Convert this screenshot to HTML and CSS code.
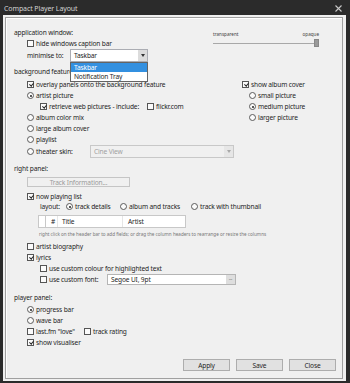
FILE: index.html
```html
<!DOCTYPE html>
<html lang="en">
<head>
  <meta charset="UTF-8">
  <title>Compact Player Layout</title>
  <link rel="stylesheet" href="styles.css">
</head>
<body>
<div class="window">
  <div class="titlebar">
    <span class="title">Compact Player Layout</span>
    <svg class="close" width="7" height="7" viewBox="0 0 7 7"><path d="M0.5 0.5L6.5 6.5M6.5 0.5L0.5 6.5" stroke="#c8c8c8" stroke-width="1.1"/></svg>
  </div>
  <div class="client">
    <div class="frame">

      <!-- application window -->
      <div class="app-window">
        <div class="app-left">
          <div class="heading">application window:</div>
          <div class="row indent"><span class="cb"></span>hide windows caption bar</div>
          <div class="row indent tall">
            <span class="label-minimise">minimise to:</span>
            <div class="combo">
              <span class="combo-text">Taskbar</span>
              <span class="combo-btn"><i class="arrow"></i></span>
              <ul class="dropdown">
                <li class="selected">Taskbar</li>
                <li>Notification Tray</li>
              </ul>
            </div>
          </div>
        </div>
        <div class="opacity">
          <div class="opacity-labels"><span>transparent</span><span>opaque</span></div>
          <div class="track"><span class="thumb"></span></div>
        </div>
      </div>

      <!-- background features (partly covered by the open dropdown) -->
      <div class="heading bg-heading">background features:</div>
      <div class="bg">
        <div class="bg-left">
          <div class="row"><span class="cb on"></span>overlay panels onto the background feature</div>
          <div class="row"><span class="rb on"></span>artist picture</div>
          <div class="row sub">
            <span class="item retrieve"><span class="cb on"></span>retrieve web pictures - include:</span>
            <span class="item"><span class="cb"></span>flickr.com</span>
          </div>
          <div class="row"><span class="rb"></span>album color mix</div>
          <div class="row"><span class="rb"></span>large album cover</div>
          <div class="row"><span class="rb"></span>playlist</div>
          <div class="row theater">
            <span class="rb"></span><span class="label-theater">theater skin:</span>
            <div class="combo disabled wide">
              <span class="combo-text">Cine View</span>
              <span class="combo-btn"><i class="arrow"></i></span>
            </div>
          </div>
        </div>
        <div class="bg-right">
          <div class="row"><span class="cb on"></span>show album cover</div>
          <div class="row pic"><span class="rb"></span>small picture</div>
          <div class="row pic"><span class="rb on"></span>medium picture</div>
          <div class="row pic"><span class="rb"></span>larger picture</div>
        </div>
      </div>

      <!-- right panel -->
      <div class="heading rp-heading">right panel:</div>
      <div class="indent"><button class="btn disabled track-info">Track Information...</button></div>
      <div class="row indent now-playing"><span class="cb on"></span>now playing list</div>
      <div class="row sub layout-row">
        <span class="label-layout">layout:</span>
        <span class="item opt-a"><span class="rb on"></span>track details</span>
        <span class="item opt-b"><span class="rb"></span>album and tracks</span>
        <span class="item"><span class="rb"></span>track with thumbnail</span>
      </div>
      <div class="columns">
        <span class="col col-blank"></span>
        <span class="col col-num">#</span>
        <span class="col col-title">Title</span>
        <span class="col col-artist">Artist</span>
      </div>
      <div class="hint">right click on the header bar to add fields; or drag the column headers to rearrange or resize the columns</div>
      <div class="row indent bio"><span class="cb"></span>artist biography</div>
      <div class="row indent"><span class="cb on"></span>lyrics</div>
      <div class="row sub"><span class="cb"></span>use custom colour for highlighted text</div>
      <div class="row sub">
        <span class="item font-label"><span class="cb"></span>use custom font:</span>
        <div class="textbox">
          <span class="textbox-text">Segoe UI, 9pt</span>
          <span class="textbox-btn">...</span>
        </div>
      </div>

      <!-- player panel -->
      <div class="heading pp-heading">player panel:</div>
      <div class="row indent pp-first"><span class="rb on"></span>progress bar</div>
      <div class="row indent"><span class="rb"></span>wave bar</div>
      <div class="row indent">
        <span class="item lastfm"><span class="cb"></span>last.fm "love"</span>
        <span class="item"><span class="cb"></span>track rating</span>
      </div>
      <div class="row indent"><span class="cb on"></span>show visualiser</div>

      <div class="footer">
        <button class="btn">Apply</button>
        <button class="btn">Save</button>
        <button class="btn">Close</button>
      </div>
    </div>
  </div>
</div>
</body>
</html>
```

FILE: styles.css
```css
body {
  margin: 0;
  background: #2b2b2b;
  font-family: "Noto Sans", sans-serif;
  font-size: 6.6px;
  letter-spacing: -0.15px;
  color: #1e1e1e;
}
.window {
  width: 350px;
  height: 383px;
  display: flex;
  flex-direction: column;
}
.titlebar {
  height: 15px;
  display: flex;
  align-items: center;
  justify-content: space-between;
  padding: 1px 8px 0 4px;
  box-sizing: border-box;
  color: #d2d2d2;
  font-size: 7px;
  letter-spacing: -0.1px;
}
.client {
  flex: 1;
  margin: 0 4px 2px 3px;
  padding: 2px 3px 2px 2px;
  background: #f0f0f0;
  display: flex;
}
.frame {
  flex: 1;
  border: 1px solid #a0a0a0;
  box-shadow: inset 1px 1px 0 #fff;
  padding: 9px 6px 7px 8px;
  display: flex;
  flex-direction: column;
}

/* rows */
.heading {
  height: 11px;
  display: flex;
  align-items: center;
  white-space: nowrap;
}
.row {
  height: 11px;
  display: flex;
  align-items: center;
  gap: 2px;
  white-space: nowrap;
}
.item {
  display: flex;
  align-items: center;
  gap: 2px;
}
.indent { padding-left: 13px; }
.sub { padding-left: 26px; }
.bg-left .sub { padding-left: 13px; }
.tall { height: 13px; gap: 0; }

/* checkbox + radio */
.cb {
  width: 7px;
  height: 7px;
  box-sizing: border-box;
  border: 1px solid #555;
  background: #fbfbfb;
  position: relative;
  flex: none;
}
.cb.on::after {
  content: "";
  position: absolute;
  left: 1.5px;
  top: 0;
  width: 1.5px;
  height: 3px;
  border: solid #222;
  border-width: 0 1px 1px 0;
  transform: rotate(40deg);
}
.rb {
  width: 7px;
  height: 7px;
  box-sizing: border-box;
  border: 1px solid #5a5a5a;
  border-radius: 50%;
  background: #fbfbfb;
  position: relative;
  flex: none;
}
.rb.on::after {
  content: "";
  position: absolute;
  left: 1.5px;
  top: 1.5px;
  width: 2px;
  height: 2px;
  border-radius: 50%;
  background: #222;
}

/* application window */
.app-window {
  display: flex;
}
.app-left { flex: 1; }
.label-minimise { width: 43px; }
.opacity {
  width: 106px;
  margin: 4px 17px 0 0;
}
.opacity-labels {
  display: flex;
  justify-content: space-between;
  font-size: 4.6px;
  letter-spacing: 0;
  color: #444;
  height: 7px;
}
.track {
  height: 1px;
  margin-top: 5px;
  margin-right: 2px;
  background: #a8a8a8;
  position: relative;
}
.thumb {
  position: absolute;
  right: -2px;
  top: -4px;
  width: 5px;
  height: 8px;
  background: #9a9a9a;
  border: 1px solid #888;
  box-sizing: border-box;
}

/* combo boxes */
.combo {
  position: relative;
  width: 78px;
  height: 13px;
  box-sizing: border-box;
  border: 1px solid #abadb3;
  background: #fff;
  display: flex;
  align-items: center;
}
.combo-text {
  flex: 1;
  padding-left: 3px;
}
.combo-btn {
  width: 9px;
  height: 11px;
  background: #dcdcdc;
  display: flex;
  align-items: center;
  justify-content: center;
}
.arrow {
  width: 0;
  height: 0;
  border-left: 2.5px solid transparent;
  border-right: 2.5px solid transparent;
  border-top: 3px solid #333;
}
.combo.disabled {
  background: #f0f0f0;
  border-color: #c8c8c8;
  color: #a0a0a0;
}
.combo.disabled .combo-btn { background: #e6e6e6; }
.combo.disabled .arrow { border-top-color: #a8a8a8; }
.combo.wide { width: 144px; }
.dropdown {
  position: absolute;
  left: -1px;
  top: 12px;
  width: 78px;
  margin: 0;
  padding: 0;
  list-style: none;
  background: #fff;
  border: 1px solid #646464;
  box-sizing: border-box;
  z-index: 2;
}
.dropdown li {
  height: 9px;
  line-height: 9px;
  padding-left: 3px;
}
.dropdown li.selected {
  background: #3390e0;
  color: #fff;
}

/* background features */
.bg-heading { margin-top: 4px; }
.bg {
  display: flex;
  margin-top: 2px;
}
.bg-left {
  flex: 1;
  padding-left: 13px;
}
.bg-right { width: 94px; }
.pic { padding-left: 7px; }
.retrieve { width: 105px; }
.theater {
  height: 13px;
  gap: 2px;
}
.label-theater { width: 52px; }

/* right panel */
.rp-heading { margin-top: 5px; }
.btn {
  font-family: inherit;
  font-size: 6.6px;
  letter-spacing: -0.15px;
  color: #1e1e1e;
  background: #e1e1e1;
  border: 1px solid #adadad;
  height: 12px;
  width: 47px;
  padding: 0;
}
.btn.disabled {
  background: #f0f0f0;
  border-color: #c5c5c5;
  color: #9a9a9a;
}
.track-info {
  width: 103px;
  height: 10px;
  margin-top: 3px;
  display: block;
}
.now-playing { margin-top: 4px; }
.layout-row { height: 9px; }
.label-layout { width: 24px; }
.opt-a { width: 52px; }
.opt-b { width: 69px; }
.columns {
  margin: 4px 0 0 24px;
  width: 148px;
  height: 13px;
  box-sizing: border-box;
  border: 1px solid #c8c8c8;
  background: #fff;
  display: flex;
}
.col {
  display: flex;
  align-items: center;
  border-right: 1px solid #e6e6e6;
}
.col-blank { width: 6px; border-right-color: #c8c8c8; }
.col-num { width: 12px; padding-left: 5px; box-sizing: border-box; }
.col-title { width: 65px; padding-left: 4px; box-sizing: border-box; }
.col-artist { flex: 1; padding-left: 5px; border-right: none; }
.hint {
  margin: 3px 0 0 25px;
  height: 7px;
  font-size: 4.6px;
  letter-spacing: 0;
  line-height: 7px;
  color: #777;
  white-space: nowrap;
}
.bio { margin-top: 3px; }
.font-label { width: 65px; }
.textbox {
  width: 129px;
  height: 11px;
  box-sizing: border-box;
  border: 1px solid #b5b5b5;
  background: #fff;
  display: flex;
  align-items: center;
}
.textbox-text {
  flex: 1;
  padding-left: 3px;
}
.textbox-btn {
  width: 9px;
  height: 9px;
  background: #dedede;
  color: #666;
  font-size: 5px;
  line-height: 7px;
  text-align: center;
}

/* player panel */
.pp-heading { margin-top: 7px; }
.pp-first { margin-top: 1px; }
.lastfm { width: 55px; }

.footer {
  margin-top: auto;
  display: flex;
  justify-content: flex-end;
  gap: 6px;
}
```
